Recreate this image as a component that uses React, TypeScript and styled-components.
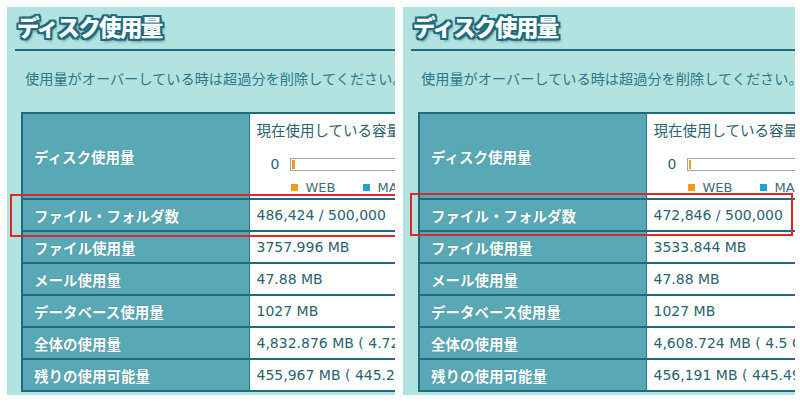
import styled, { createGlobalStyle } from "styled-components";

const GlobalStyle = createGlobalStyle`
  body {
    margin: 0;
    background: #ffffff;
    font-family: "DejaVu Sans", "Noto Sans CJK JP", sans-serif;
  }
`;

const Page = styled.div`
  display: flex;
  gap: 8px;
  padding: 7px 0 0 7px;
  width: 800px;
  height: 405px;
  box-sizing: border-box;
  overflow: hidden;
`;

const Panel = styled.section<{ $width: number }>`
  position: relative;
  width: ${(p) => p.$width}px;
  height: 388px;
  background: #b3e3e1;
  overflow: hidden;
  flex-shrink: 0;
`;

const Header = styled.div`
  margin-left: 8px;
  height: 41px;
  border-bottom: 2px solid #1f6b7d;
  padding: 1px 0 0 2px;
  box-sizing: content-box;
`;

const Title = styled.h2`
  margin: 0;
  font-family: "Noto Sans CJK JP", sans-serif;
  font-weight: 900;
  font-size: 22.5px;
  line-height: 36px;
  letter-spacing: -1.6px;
  color: #ffffff;
  text-shadow:
    2px 0 0 #1f6b7d, -2px 0 0 #1f6b7d, 0 2px 0 #1f6b7d, 0 -2px 0 #1f6b7d,
    2px 2px 0 #1f6b7d, -2px 2px 0 #1f6b7d, 2px -2px 0 #1f6b7d, -2px -2px 0 #1f6b7d,
    2px 3px 3px rgba(20, 70, 80, 0.6);
`;

const Notice = styled.p`
  margin: 0 0 24px 0;
  padding: 17px 0 0 18px;
  font-family: "Noto Sans CJK JP", sans-serif;
  font-size: 14.2px;
  line-height: 20px;
  color: #2c7786;
  white-space: nowrap;
`;

const Table = styled.table<{ $left: number }>`
  margin-left: ${(p) => p.$left}px;
  width: 460px;
  table-layout: fixed;
  border-collapse: collapse;
  border: 2px solid #1f6b7d;
`;

const Row = styled.tr<{ $tall?: boolean }>`
  height: ${(p) => (p.$tall ? 86 : 32)}px;
  border-bottom: 2px solid #1f6b7d;
`;

const LabelCol = styled.col`
  width: 227px;
`;

const LabelCell = styled.th`
  background: #58a8b5;
  border-right: 1px solid #2a7686;
  padding: 0 0 0 11px;
  text-align: left;
  vertical-align: middle;
  font-family: "Noto Sans CJK JP", sans-serif;
  font-weight: 700;
  font-size: 14.5px;
  color: #ffffff;
  text-shadow: 0 0 1px rgba(30, 90, 100, 0.5);
  white-space: nowrap;
  overflow: hidden;
`;

const ValueCell = styled.td<{ $top?: boolean }>`
  background: #ffffff;
  padding: ${(p) => (p.$top ? "6px" : "0")} 0 0 7px;
  vertical-align: ${(p) => (p.$top ? "top" : "middle")};
  font-size: 14px;
  color: #2b6270;
  white-space: nowrap;
  overflow: hidden;
`;

const JpLine = styled.div`
  font-family: "Noto Sans CJK JP", sans-serif;
  font-size: 14.5px;
  line-height: 20px;
  color: #2b6270;
`;

const BarRow = styled.div`
  display: flex;
  align-items: center;
  height: 16px;
  margin-top: 16px;
  padding-left: 14px;
  gap: 11px;
`;

const Zero = styled.span`
  font-size: 14px;
  color: #2b6270;
`;

const Bar = styled.div`
  width: 300px;
  height: 9px;
  border: 1px solid #a5a5a5;
  background: #ffffff;
  padding: 1px;
  display: flex;
`;

const BarFill = styled.div<{ $w: number }>`
  width: ${(p) => p.$w}px;
  background: #f29c1a;
`;

const Legend = styled.div`
  display: flex;
  align-items: center;
  margin-top: 8px;
  padding-left: 34px;
  height: 14px;
  gap: 27px;
`;

const LegendItem = styled.span`
  display: flex;
  align-items: center;
  gap: 8px;
  font-size: 13px;
  color: #3e6d78;
`;

const Swatch = styled.i<{ $color: string }>`
  display: block;
  width: 7px;
  height: 7px;
  background: ${(p) => p.$color};
`;

const Highlight = styled.div<{ $left: number; $width: number; $top: number; $height: number }>`
  position: absolute;
  left: ${(p) => p.$left}px;
  top: ${(p) => p.$top}px;
  width: ${(p) => p.$width}px;
  height: ${(p) => p.$height}px;
  border: 2px solid #e0262a;
  box-sizing: border-box;
  pointer-events: none;
`;

type Box = { left: number; width: number; top: number; height: number };

type PanelData = {
  width: number;
  tableLeft: number;
  fill: number;
  files: string;
  fileUse: string;
  mailUse: string;
  dbUse: string;
  total: string;
  remain: string;
  box: Box;
};

const panels: PanelData[] = [
  {
    width: 388,
    tableLeft: 14,
    fill: 3,
    files: "486,424 / 500,000",
    fileUse: "3757.996 MB",
    mailUse: "47.88 MB",
    dbUse: "1027 MB",
    total: "4,832.876 MB ( 4.72 GB )",
    remain: "455,967 MB ( 445.28 GB )",
    box: { left: 3, width: 388, top: 187, height: 43 },
  },
  {
    width: 392,
    tableLeft: 15,
    fill: 2,
    files: "472,846 / 500,000",
    fileUse: "3533.844 MB",
    mailUse: "47.88 MB",
    dbUse: "1027 MB",
    total: "4,608.724 MB ( 4.5 GB )",
    remain: "456,191 MB ( 445.49 GB )",
    box: { left: 7, width: 383, top: 186, height: 43 },
  },
];

const DiskPanel = ({ data }: { data: PanelData }) => (
  <Panel $width={data.width}>
    <Header>
      <Title>ディスク使用量</Title>
    </Header>
    <Notice>使用量がオーバーしている時は超過分を削除してください。</Notice>
    <Table $left={data.tableLeft}>
      <colgroup>
        <LabelCol />
        <col />
      </colgroup>
      <tbody>
        <Row $tall>
          <LabelCell>ディスク使用量</LabelCell>
          <ValueCell $top>
            <JpLine>現在使用している容量の内訳</JpLine>
            <BarRow>
              <Zero>0</Zero>
              <Bar>
                <BarFill $w={data.fill} />
              </Bar>
            </BarRow>
            <Legend>
              <LegendItem>
                <Swatch $color="#f29c1a" />
                WEB
              </LegendItem>
              <LegendItem>
                <Swatch $color="#1ba3d4" />
                MAIL
              </LegendItem>
            </Legend>
          </ValueCell>
        </Row>
        <Row>
          <LabelCell>ファイル・フォルダ数</LabelCell>
          <ValueCell>{data.files}</ValueCell>
        </Row>
        <Row>
          <LabelCell>ファイル使用量</LabelCell>
          <ValueCell>{data.fileUse}</ValueCell>
        </Row>
        <Row>
          <LabelCell>メール使用量</LabelCell>
          <ValueCell>{data.mailUse}</ValueCell>
        </Row>
        <Row>
          <LabelCell>データベース使用量</LabelCell>
          <ValueCell>{data.dbUse}</ValueCell>
        </Row>
        <Row>
          <LabelCell>全体の使用量</LabelCell>
          <ValueCell>{data.total}</ValueCell>
        </Row>
        <Row>
          <LabelCell>残りの使用可能量</LabelCell>
          <ValueCell>{data.remain}</ValueCell>
        </Row>
      </tbody>
    </Table>
    <Highlight
      $left={data.box.left}
      $width={data.box.width}
      $top={data.box.top}
      $height={data.box.height}
    />
  </Panel>
);

export default function App() {
  return (
    <>
      <GlobalStyle />
      <Page>
        {panels.map((p, i) => (
          <DiskPanel data={p} key={i} />
        ))}
      </Page>
    </>
  );
}
